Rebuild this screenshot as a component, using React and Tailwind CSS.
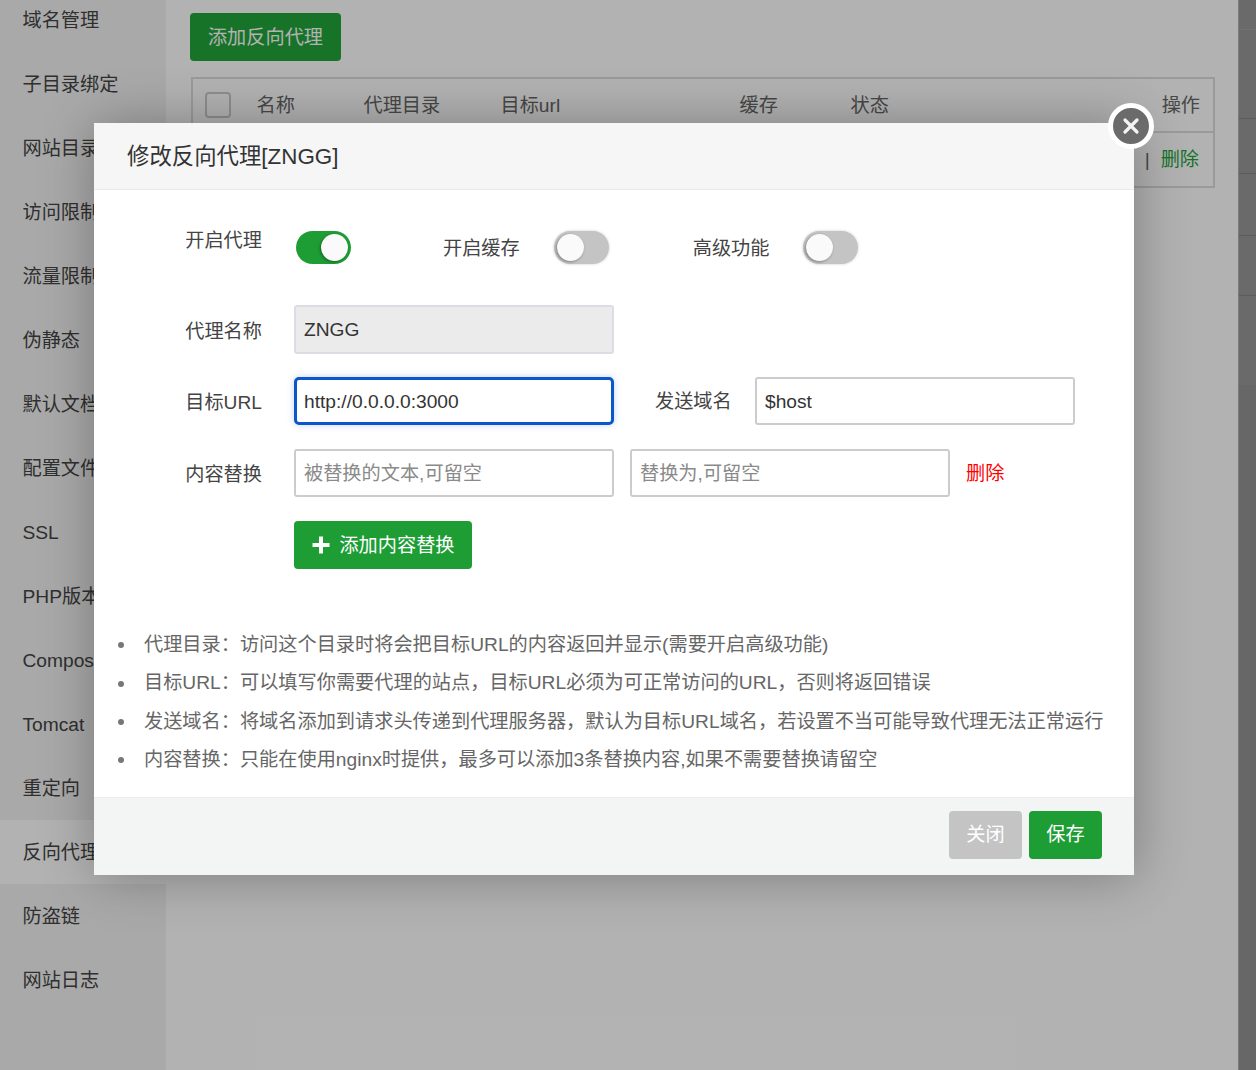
const sidebar = ["域名管理","子目录绑定","网站目录","访问限制","流量限制","伪静态","默认文档","配置文件","SSL","PHP版本","Composer","Tomcat","重定向","反向代理","防盗链","网站日志"];
const notes = [
  "代理目录：访问这个目录时将会把目标URL的内容返回并显示(需要开启高级功能)",
  "目标URL：可以填写你需要代理的站点，目标URL必须为可正常访问的URL，否则将返回错误",
  "发送域名：将域名添加到请求头传递到代理服务器，默认为目标URL域名，若设置不当可能导致代理无法正常运行",
  "内容替换：只能在使用nginx时提供，最多可以添加3条替换内容,如果不需要替换请留空",
];

function Toggle({ on }) {
  return (
    <div className={`flex h-[33px] w-[55px] shrink-0 rounded-full p-[3px] ${on ? "justify-end bg-[#1e9d35]" : "justify-start bg-[#c4c4c4] shadow-[0_0_3px_rgba(0,0,0,0.2)]"}`}>
      <div className="h-[27px] w-[27px] rounded-full bg-[#fafafa] shadow-[-1px_1px_3px_rgba(0,0,0,0.35)]" />
    </div>
  );
}

function Label({ children, className = "" }) {
  return <div className={`w-[168px] shrink-0 text-right text-[#444] ${className}`}>{children}</div>;
}

export default function App() {
  return (
    <div className="relative flex h-[1070px] w-[1256px] overflow-hidden bg-white text-[19.2px] font-['Liberation_Sans','Noto_Sans_CJK_SC',sans-serif]">
      <aside className="-mt-3 w-[166px] shrink-0 bg-[#f3f3f3] text-[#444]">
        {sidebar.map((s) => (
          <div key={s} className={`flex h-16 items-center pl-[22.5px] pt-[3px] ${s === "反向代理" ? "bg-white" : ""}`}>{s}</div>
        ))}
      </aside>

      <main className="w-[1072px] shrink-0 pl-6 pr-6 pt-[13px]">
        <button className="flex h-12 w-[151px] items-center justify-center rounded bg-[#20a53a] pt-[2px] text-white">添加反向代理</button>
        <div className="ml-px mt-4 w-[1024px] border-2 border-[#ddd] text-[#666]">
          <div className="flex h-[54px] items-center border-b-2 border-[#ddd] pl-3 pr-[13px] pt-[2px]">
            <span className="-mt-[2px] h-[26px] w-[26px] rounded border-2 border-[#ccc] bg-white" />
            <span className="ml-[25.5px] w-[107px]">名称</span>
            <span className="w-[137px]">代理目录</span>
            <span className="w-[239px]">目标url</span>
            <span className="w-[111px]">缓存</span>
            <span>状态</span>
            <span className="ml-auto">操作</span>
          </div>
          <div className="flex h-[53px] items-center justify-end pr-[14px] pt-[2px]">
            <span className="mr-[11px]">|</span>
            <span className="text-[#20a53a]">删除</span>
          </div>
        </div>
      </main>

      <div className="w-[18px] shrink-0 border-l border-[#b0b0b0] bg-[#999]">
        <div className="h-[30px] border-b border-[#a3a3a3]" />
        <div className="h-[89px] border-b border-[#858585]" />
        <div className="h-[55px] border-b border-[#858585]" />
        <div className="h-[62px] border-b border-[#858585]" />
        <div className="h-[60px] border-b border-[#858585]" />
        <div className="h-[89px]" />
        <div className="h-[685px] bg-[#949494]" />
      </div>

      <div className="absolute inset-0 bg-black/30" />

      <div className="absolute left-[94px] top-[123px] h-[752px] w-[1040px] bg-white shadow-[1px_1px_50px_rgba(0,0,0,0.3)]">
        <button className="absolute -right-[20px] -top-[20px] flex h-[46px] w-[46px] items-center justify-center rounded-full border-[5px] border-white bg-[#6b6b6b]">
          <svg width="22" height="22" viewBox="0 0 22 22"><path d="M5 5 L17 17 M17 5 L5 17" stroke="#f4f4f4" strokeWidth="3.2" strokeLinecap="round" /></svg>
        </button>

        <div className="flex h-[67px] items-center border-b border-[#eaeaea] bg-[#f6f6f6] pl-[33px] pt-[2px] text-[22.4px] text-[#333]">修改反向代理[ZNGG]</div>

        <div className="pt-[41px]">
          <div className="flex h-[33px] items-start">
            <Label className="-mt-[4px]">开启代理</Label>
            <div className="ml-[34px]"><Toggle on /></div>
            <span className="ml-[92px] mt-[4px] text-[#444]">开启缓存</span>
            <div className="ml-[34px]"><Toggle /></div>
            <span className="ml-[84px] mt-[4px] text-[#444]">高级功能</span>
            <div className="ml-[33px]"><Toggle /></div>
          </div>

          <div className="mt-[41px] flex items-center">
            <Label className="pt-[5px]">代理名称</Label>
            <div className="ml-8 flex h-[49px] w-[320px] items-center rounded-[3px] border-2 border-[#dcdce6] bg-[#ebebeb] pl-2 pt-[2px] text-[#333]">ZNGG</div>
          </div>

          <div className="mt-[23px] flex items-center">
            <Label className="pt-[4px]">目标URL</Label>
            <div className="ml-8 flex h-12 w-[320px] items-center rounded-[5px] border-[3px] border-[#0b57c9] bg-white pl-[7px] pt-[2px] text-[#333] shadow-[0_0_7px_rgba(11,87,201,0.25)]">http://0.0.0.0:3000</div>
            <span className="ml-[41px] w-[76px] whitespace-nowrap pt-[2px] text-[#444]">发送域名</span>
            <div className="ml-6 flex h-12 w-[320px] items-center rounded-[3px] border-2 border-[#ccc] bg-white pl-2 pt-[2px] text-[#333]">$host</div>
          </div>

          <div className="mt-6 flex items-center">
            <Label className="pt-[4px]">内容替换</Label>
            <div className="ml-8 flex h-12 w-[320px] items-center rounded-[3px] border-2 border-[#ccc] bg-white pl-2 pt-[2px] text-[#8a8a8a]">被替换的文本,可留空</div>
            <div className="ml-4 flex h-12 w-[320px] items-center rounded-[3px] border-2 border-[#ccc] bg-white pl-2 pt-[2px] text-[#8a8a8a]">替换为,可留空</div>
            <span className="ml-4 pt-[2px] text-[#f00]">删除</span>
          </div>

          <button className="ml-[200px] mt-6 flex h-12 w-[178px] items-center justify-center gap-[9px] rounded bg-[#1e9d35] pl-[1px] text-white">
            <svg width="18" height="18" viewBox="0 0 18 18"><path d="M7 0.5h4v6.5h6.5v4h-6.5v6.5h-4v-6.5h-6.5v-4h6.5z" fill="#fff" /></svg>
            <span className="pt-[2px]">添加内容替换</span>
          </button>
        </div>

        <ul className="ml-[24px] mt-[57px] text-[#666]">
          {notes.map((n) => (
            <li key={n} className="flex h-[38.4px] items-center">
              <span className="h-[6px] w-[6px] shrink-0 rounded-full bg-[#777]" />
              <span className="ml-[20px] whitespace-nowrap">{n}</span>
            </li>
          ))}
        </ul>

        <div className="absolute inset-x-0 bottom-0 flex h-[78px] items-center justify-end gap-[7px] border-t border-[#ececec] bg-[#f3f5f4] pb-[3px] pr-8">
          <button className="flex h-12 w-[73px] items-center justify-center rounded bg-[#c4c4c4] text-white">关闭</button>
          <button className="flex h-12 w-[73px] items-center justify-center rounded bg-[#1e9d35] text-white">保存</button>
        </div>
      </div>
    </div>
  );
}
